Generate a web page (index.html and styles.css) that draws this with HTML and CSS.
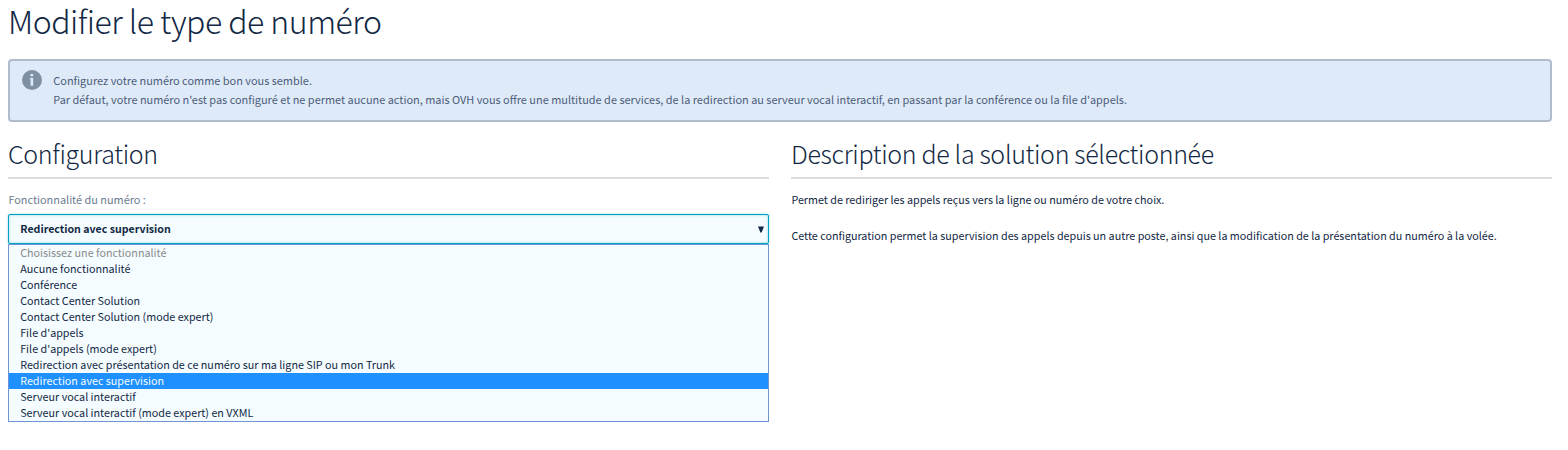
FILE: index.html
```html
<!DOCTYPE html>
<html lang="fr">
<head>
<meta charset="utf-8">
<title>Modifier le type de numéro</title>
<link rel="stylesheet" href="styles.css">
</head>
<body>
<h1 class="page-title">Modifier le type de numéro</h1>
<div class="notice">
  <svg class="notice-icon" width="20" height="20" viewBox="0 0 20 20"><circle cx="10" cy="10" r="10" fill="#7f8fa4"/><path d="M8.4 4h2.8v2.2H8.4zM7.8 8h3.4v7.8H8.6V9.2h-.8z" fill="#deeaf8"/></svg>
  <div class="notice-text">
    <p>Configurez votre numéro comme bon vous semble.</p>
    <p>Par défaut, votre numéro n'est pas configuré et ne permet aucune action, mais OVH vous offre une multitude de services, de la redirection au serveur vocal interactif, en passant par la conférence ou la file d'appels.</p>
  </div>
</div>
<div class="columns">
  <section>
    <h2 class="section-title">Configuration</h2>
    <div class="field-label">Fonctionnalité du numéro :</div>
    <div class="select"><span>Redirection avec supervision</span><svg class="caret" width="6" height="7" viewBox="0 0 6 7"><path d="M0 .5h6L3.6 6.5H2.4z" fill="#122844"/></svg></div>
    <ul class="options">
      <li class="disabled">Choisissez une fonctionnalité</li>
      <li>Aucune fonctionnalité</li>
      <li>Conférence</li>
      <li>Contact Center Solution</li>
      <li>Contact Center Solution (mode expert)</li>
      <li>File d'appels</li>
      <li>File d'appels (mode expert)</li>
      <li>Redirection avec présentation de ce numéro sur ma ligne SIP ou mon Trunk</li>
      <li class="selected">Redirection avec supervision</li>
      <li>Serveur vocal interactif</li>
      <li>Serveur vocal interactif (mode expert) en VXML</li>
    </ul>
  </section>
  <section>
    <h2 class="section-title">Description de la solution sélectionnée</h2>
    <div class="description">
      <p>Permet de rediriger les appels reçus vers la ligne ou numéro de votre choix.</p>
      <p>Cette configuration permet la supervision des appels depuis un autre poste, ainsi que la modification de la présentation du numéro à la volée.</p>
    </div>
  </section>
</div>
</body>
</html>
```
FILE: styles.css
```css
* { box-sizing: border-box; margin: 0; padding: 0; }
body {
  padding: 0 16px 0 8px;
  background: #fff;
  color: #122844;
  font: 400 10.75px/18px "Noto Sans CJK SC", "Noto Sans", sans-serif;
  white-space: nowrap;
  overflow: hidden;
}
.page-title { height: 59px; font-size: 32px; font-weight: 300; line-height: 40px; letter-spacing: -0.5px; }
.notice {
  display: flex;
  height: 63px;
  padding: 9px 11px;
  border: 2px solid #b0bccd;
  border-radius: 4px;
  background: #deeaf8;
  color: #4d5d7a;
  font-size: 10.93px;
  line-height: 19px;
}
.notice-icon { margin: 0 11.8px 0 0.5px; flex: none; }
.notice-text { padding-top: 1px; }
.columns { display: grid; grid-template-columns: 761px 761px; gap: 22px; padding-top: 15px; }
.section-title {
  height: 42px;
  border-bottom: 2px solid #dcdcdc;
  font-size: 25px;
  font-weight: 300;
  line-height: 33px;
  letter-spacing: -0.34px;
}
.field-label { height: 35px; padding: 11px 0 0 0.4px; color: #6b7b91; font-size: 10.9px; }
.select {
  display: flex;
  align-items: center;
  justify-content: space-between;
  height: 30px;
  padding: 0 4px 0 11.3px;
  border: 1px solid #00a2bf;
  border-radius: 2px;
  box-shadow: 0 0 2px #00a2bf80, inset 0 0 3px #00a2bf60;
  background: #f4fcff;
  font-size: 10.62px;
  font-weight: 700;
}
.select span { padding-bottom: 1px; }
.options {
  height: 178px;
  border: 1px solid #6d95d3;
  background: #f4fcff;
  list-style: none;
}
.options li { height: 16px; padding-left: 11.2px; line-height: 15px; }
.options .disabled { color: #8a8a8a; }
.options .selected { background: #1e90ff; color: #f4fcff; }
.description { padding: 12px 0 0 0.4px; }
.description p { margin-bottom: 18px; }
```
